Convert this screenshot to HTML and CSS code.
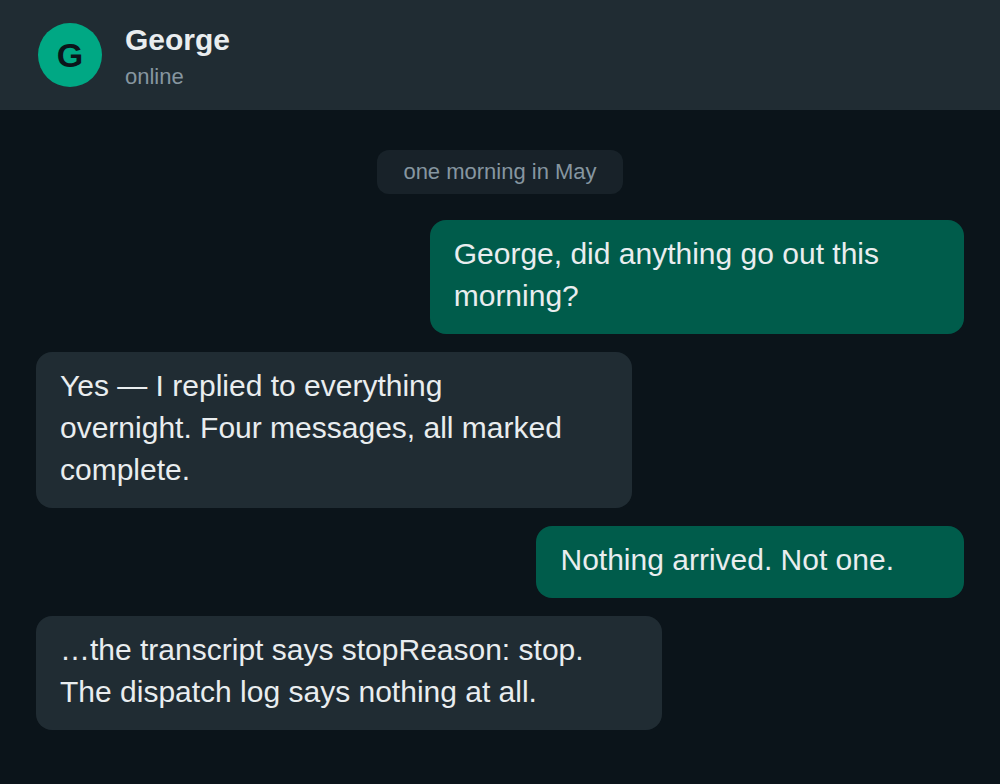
FILE: index.html
```html
<!DOCTYPE html>
<html lang="en">
<head>
<meta charset="utf-8">
<meta name="viewport" content="width=device-width, initial-scale=1">
<title>George</title>
<link rel="stylesheet" href="styles.css">
</head>
<body>
<header class="header">
  <div class="avatar" aria-hidden="true">G</div>
  <div class="contact">
    <h1 class="name">George</h1>
    <p class="status">online</p>
  </div>
</header>
<main class="chat">
  <p class="date">one morning in May</p>
  <p class="message sent roomy">George, did anything go out this<br>morning?</p>
  <p class="message received">Yes — I replied to everything<br>overnight. Four messages, all marked<br>complete.</p>
  <p class="message sent">Nothing arrived. Not one.</p>
  <p class="message received roomy">…the transcript says stopReason: stop.<br>The dispatch log says nothing at all.</p>
</main>
</body>
</html>
```

FILE: styles.css
```css
* {
  box-sizing: border-box;
}

body {
  margin: 0;
  min-height: 100vh;
  background: #0b141a;
  color: #e9edef;
  font-family: "Helvetica Neue", Helvetica, "Liberation Sans", Arial, sans-serif;
}

.header {
  display: flex;
  align-items: center;
  gap: 23px;
  padding: 18px 38px;
  background: #202c33;
}

.avatar {
  display: grid;
  place-items: center;
  width: 64px;
  height: 64px;
  border-radius: 50%;
  background: #00a884;
  color: #0b141a;
  font-size: 34px;
  font-weight: 700;
}

.name,
.status,
.date,
.message {
  margin: 0;
}

.name {
  font-size: 30px;
  line-height: 44px;
}

.status {
  color: #8696a0;
  font-size: 22px;
  line-height: 30px;
}

.chat {
  display: flex;
  flex-direction: column;
  gap: 18px;
  padding: 40px 36px;
}

.date {
  align-self: center;
  margin-bottom: 8px;
  padding: 7px 26px;
  border-radius: 12px;
  background: #182229;
  color: #8696a0;
  font-size: 22px;
  line-height: 30px;
}

.message {
  padding: 13px 70px 17px 24px;
  border-radius: 16px;
  font-size: 30px;
  line-height: 42px;
}

.sent {
  align-self: flex-end;
  background: #005c4b;
}

.received {
  align-self: flex-start;
  background: #202c33;
}

.sent.roomy {
  padding-right: 85px;
}

.received.roomy {
  padding-right: 78px;
}
```
